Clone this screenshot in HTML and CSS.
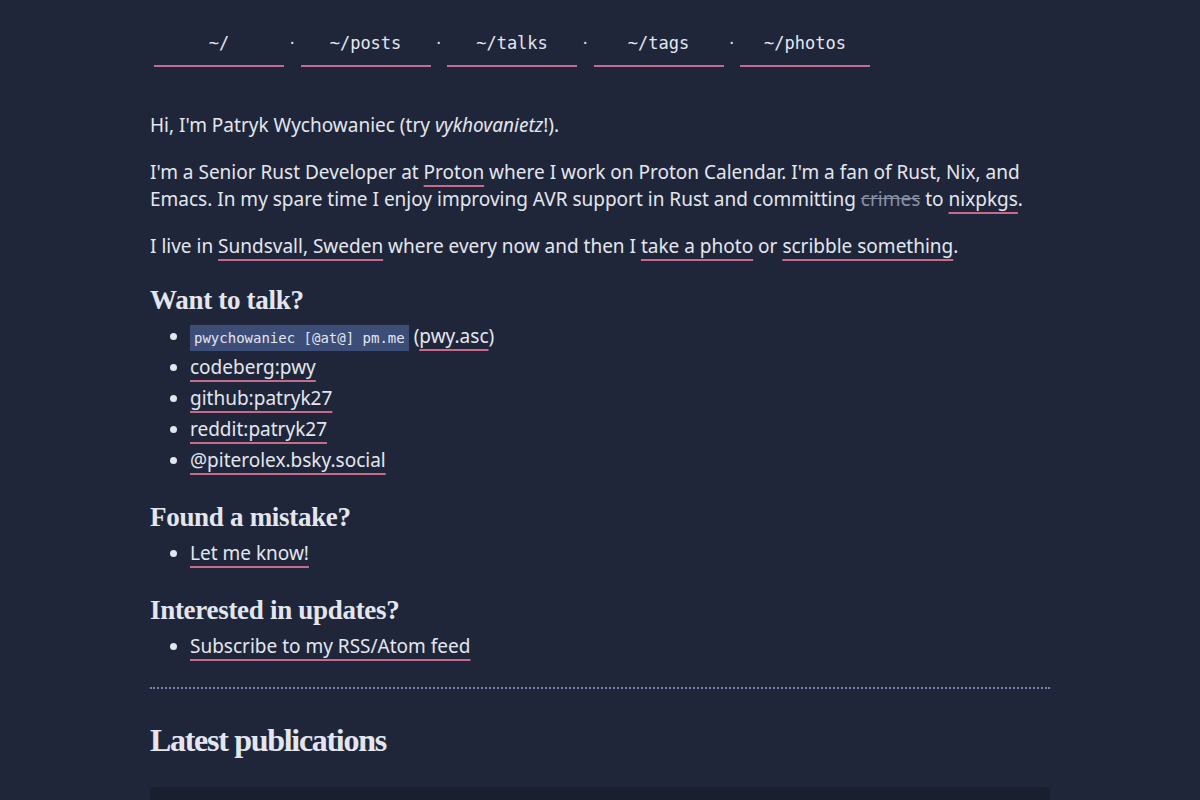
FILE: index.html
```html
<!DOCTYPE html>
<html lang="en">
<head>
    <meta charset="UTF-8">
    <meta name="viewport" content="width=device-width, initial-scale=1.0">
    <title>pwy.io</title>
    <link rel="stylesheet" href="styles.css">
</head>
<body>

    <nav class="nav">
        <a href="#">~/</a>
        <span class="sep">·</span>
        <a href="#">~/posts</a>
        <span class="sep">·</span>
        <a href="#">~/talks</a>
        <span class="sep">·</span>
        <a href="#">~/tags</a>
        <span class="sep">·</span>
        <a href="#">~/photos</a>
    </nav>

    <main class="content">
        <p>Hi, I'm Patryk Wychowaniec (try <em>vykhovanietz</em>!).</p>

        <p>I'm a Senior Rust Developer at <a href="#">Proton</a> where I work on Proton Calendar. I'm a fan of Rust, Nix, and Emacs. In my spare time I enjoy improving AVR support in Rust and committing <s>crimes</s> to <a href="#">nixpkgs</a>.</p>

        <p>I live in <a href="#">Sundsvall, Sweden</a> where every now and then I <a href="#">take a photo</a> or <a href="#">scribble something</a>.</p>

        <h2>Want to talk?</h2>
        <ul>
            <li><code>pwychowaniec [@at@] pm.me</code> (<a href="#">pwy.asc</a>)</li>
            <li><a href="#">codeberg:pwy</a></li>
            <li><a href="#">github:patryk27</a></li>
            <li><a href="#">reddit:patryk27</a></li>
            <li><a href="#">@piterolex.bsky.social</a></li>
        </ul>

        <h2>Found a mistake?</h2>
        <ul>
            <li><a href="#">Let me know!</a></li>
        </ul>

        <h2>Interested in updates?</h2>
        <ul>
            <li><a href="#">Subscribe to my RSS/Atom feed</a></li>
        </ul>

        <hr>

        <h1>Latest publications</h1>

        <div class="pub-card"></div>
    </main>

</body>
</html>
```

FILE: styles.css
```css
body {
    margin: 0;
    background: #20263a;
    color: #e3e6ef;
    font-family: "Noto Sans", "Open Sans", sans-serif;
    font-size: 19px;
    line-height: 27px;
}
a {
    color: inherit;
    text-decoration: underline;
    text-decoration-color: #c56b8c;
    text-decoration-thickness: 2px;
    text-underline-offset: 6px;
}
.nav {
    width: 896px;
    margin: 0 auto;
    padding: 27px 0 0 4px;
    display: flex;
    align-items: flex-start;
    font-family: "DejaVu Sans Mono", monospace;
    font-size: 17px;
    line-height: 32px;
}
.nav a {
    width: 130px;
    text-align: center;
    text-decoration: none;
    border-bottom: 2px solid #c56b8c;
    padding-bottom: 6px;
}
.nav .sep {
    width: 16.5px;
    text-align: center;
    font-size: 14px;
}
.content {
    width: 900px;
    margin: 0 auto;
    padding-top: 45px;
}
p {
    margin: 0 0 20px;
}
s {
    color: #8a90a3;
}
h2 {
    font-family: "Liberation Serif", serif;
    font-size: 27px;
    line-height: 32px;
    margin: 24px 0 5px;
    letter-spacing: -0.3px;
}
h1 {
    font-family: "Liberation Serif", serif;
    font-size: 32px;
    line-height: 38px;
    margin: 32px 0 28px;
    letter-spacing: -1.3px;
}
ul {
    margin: 0 0 25px;
    padding-left: 40px;
}
li {
    line-height: 31px;
}
code {
    font-family: "DejaVu Sans Mono", monospace;
    font-size: 14px;
    line-height: 1;
    background: #3c4d78;
    padding: 5px 4px;
}
hr {
    border: 0;
    border-top: 2px dotted #7d84ad;
    margin: 7px 0 0;
}
.pub-card {
    height: 40px;
    background: #1a1f2f;
    border-radius: 4px;
}
```
